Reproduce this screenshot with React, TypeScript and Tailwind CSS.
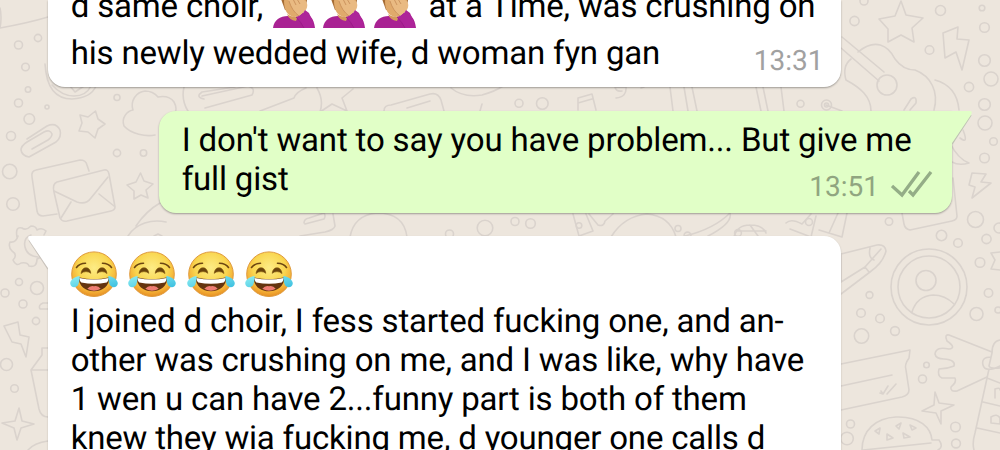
import React from "react";

function Joy() {
  return (
    <svg viewBox="0 0 48 47" className="h-[47px] w-12 shrink-0">
      <defs>
        <radialGradient id="joyFace" cx="50%" cy="36%" r="65%">
          <stop offset="0" stopColor="#fdec86" />
          <stop offset="0.55" stopColor="#f9d650" />
          <stop offset="0.82" stopColor="#f4b036" />
          <stop offset="1" stopColor="#e58b20" />
        </radialGradient>
        <linearGradient id="joyTear" x1="0" y1="0" x2="1" y2="1">
          <stop offset="0" stopColor="#8eeef2" />
          <stop offset="1" stopColor="#3cbfe0" />
        </linearGradient>
      </defs>
      <circle cx="24" cy="23.2" r="22.3" fill="url(#joyFace)" stroke="#df9a3c" strokeWidth="1" />
      <g fill="none" stroke="#6b4511" strokeLinecap="round">
        <path d="M6.5 16.5Q9.5 12.4 15.5 12.3M32.5 12.3Q38.5 12.4 41.5 16.5" strokeWidth="1.6" />
      </g>
      <path d="M11 22.5Q12 16.8 16 16.8T20.8 22.3Q18.8 20.6 16 20.6T11 22.5ZM27.2 22.3Q28 16.8 32 16.8T37 22.5Q34.8 20.6 32 20.6T27.2 22.3Z" fill="#69430c" stroke="#815710" strokeWidth="0.7" />
      <path d="M8.5 26.3Q24 30 39.5 26.3C39.2 35 33 40.2 24 40.2S8.8 35 8.5 26.3Z" fill="#64340f" />
      <path d="M9.3 26.9Q24 30.3 38.7 26.9Q38.3 30 36.7 31.5Q24 34.2 11.3 31.5Q9.7 30 9.3 26.9Z" fill="#fff" />
      <path d="M17.3 37.8Q20.3 34.2 24 35.3Q28 34.2 30.7 37.8Q24 41.5 17.3 37.8Z" fill="#ee7d73" />
      <path d="M9.7 25C5.6 25.1.2 28.8.2 32.2.4 37 6.4 37.6 8.3 33.6 9.3 31 9.6 28 9.7 25ZM38.3 25c4.1.1 9.5 3.8 9.5 7.2-.2 4.8-6.2 5.4-8.1 1.4-1-2.6-1.3-5.6-1.4-8.6Z" fill="url(#joyTear)" />
    </svg>
  );
}

function Facepalm() {
  return (
    <svg viewBox="0 0 42 42" className="h-[42px] w-[42px] shrink-0">
      <path d="M8 13Q8 2 20 2Q33 2 34 14L32 24H12Z" fill="#a76d35" />
      <path d="M11 15Q13 6 22 6Q34 7 33 18Q31 30 21 31Q11 29 11 15Z" fill="#e0aa6b" />
      <path d="M0 42C1 34 7 30 15 30L22 34L29 27C37 27 41 33 42 42Z" fill="#a92293" />
      <path d="M14 28Q19 32 25 30L23 35Q16 34 14 28Z" fill="#d59a5c" />
      <path d="M15 13C18 12 24 12 31 14C36 16 35 24 30 27L26 30C22 28 19 23 15 13Z" fill="#e9ba82" />
      <path d="M16 15Q19 25 26 30M20 13L23 19M24 13L27 18" fill="none" stroke="#c58c57" strokeWidth="0.8" />
      <path d="M23 31C27 30 31 27 32 24L36 27Q40 34 41 42H31Q27 36 23 31Z" fill="#ad2499" />
      <path d="M23 31Q28 36 31 42" fill="none" stroke="#951c84" strokeWidth="0.8" />
    </svg>
  );
}

const bubbles: [number, number, number][] = [
  [18.5, 45, 4], [38, 38, 3.6], [25.5, 67, 3.8], [28, 89.5, 2.7], [18.5, 103, 4], [117, 97.5, 3], [47, 107, 2], [29.3, 119, 5.3], [11, 136, 4.5], [9.7, 171.5, 7.2], [13, 204, 6.3], [117, 153, 3.6], [143.5, 153, 3.2],
  [5, 293, 4], [19, 282, 3.5], [37, 288, 6.5], [23, 304, 4], [36, 321, 3.6], [6.5, 364.5, 6], [14.5, 388.5, 3.8],
  [864, 1, 4], [854.5, 21, 4.6], [940.5, 10.5, 5], [982, 8, 2.8], [984.5, 27.5, 4.8], [929.5, 50, 4.3], [984.5, 60.5, 5.8], [991, 79, 7], [969, 87, 4.6], [984.5, 104.5, 5.8], [985, 123, 7], [993.5, 141.5, 3.8], [984.5, 158, 4.8], [975.5, 219.5, 8], [889, 221.5, 3.7], [941.5, 235.5, 5.2], [999, 228, 5], [958, 243, 4.3], [986.5, 239, 4.6], [980, 262.5, 4.8], [988.5, 293, 4.2], [976.5, 314, 6.5], [998, 310, 3], [869.5, 295, 3.4], [861, 313, 4.3], [880, 318.5, 4.3], [895, 331, 4.4], [861.5, 336, 7.2], [926.5, 365, 2.8], [922.5, 379, 4], [850.5, 424, 4], [847, 438.5, 6.3], [955.5, 427, 4.8], [956, 443.5, 4.4],
  [519, 103.3, 4], [542.3, 103.5, 5.8], [800.5, 103.7, 3.5], [826.5, 105, 5], [826.5, 105, 2], [449.5, 234, 4], [485, 228, 7.8], [515, 221.5, 4], [530.5, 223.5, 4.8], [579, 225.5, 2.8], [678, 228.5, 3], [687.5, 235.5, 3.4], [809, 222, 3.5], [738, 233, 3.4],
];

const lines = [
  // Left edge
  "M0 28Q28 23 48 17M0 8Q2 17 0 28",
  "M45 64Q47 99 72 99Q91 98 96 86M52 85Q62 96 74 96T91 86M70 86L75 92L84 86",
  "M27 139L47 126Q56 122 60 130Q62 137 56 142L29 157Q22 156 21 150Q21 146 27 142L44 132Q50 129 52 134Q52 137 48 140L32 149",
  "M95.5 111L98 119L105 124L98 129L95 138L88 132L79 131L82 123L80 115L88 117Z",
  "M155 135C146 137 131 134 124 126C121 118 127 111 133 110C130 101 136 92 145 91Q153 91 158 97Q169 95 174 102Q178 109 174 115",
  "M57 214L43 216Q38 216 37 211L32 177Q31 171 36 170L80 160Q86 160 87 165L89 171",
  "M57 182L104 170Q108 169 109 174L115 207Q115 210 111 211L67 221Q62 222 60 218L54 192Q52 184 57 182Z",
  "M54 191L77 202Q86 205 91 198L108 177M61 218L71 202M99 194L114 206",
  "M140.5 173L144 181L153 184L146 190L148 198L141 195L134 199L134 191L127 185L136 182Z",
  "M128 236C136 223 152 219 166 222M136 226Q146 211 160 203M154 236l4-2 4 2",
  "M17 237Q15 226 22 228Q26 231 31 226Q36 226 37 230Q42 227 46 231L44 235M18 236Q16 243 10 242Q8 247 12 251Q18 255 13 260Q16 267 21 263Q28 262 29 266Q37 268 37 259Q42 256 47 258M31 235Q23 238 25 247T38 257M48 303H43Q38 305 40 309H48M4 326L18 322L20 335L29 337L26 357L21 344L12 342Z",
  "M48 348H42V355L31 370L39 409Q41 417 48 417M31 370H48M48 441Q34 443 28 450",
  "M19 408L22 421L34 424L21 428L17 440L14 428L2 423L15 421Z",
  // Strip between the first two messages
  "M184 87Q181 100 188 111M204 99Q195 97 202 92L235 87M202 96L248 86Q256 88 252 95L205 108M260 111L294 98Q296 92 306 88M317 88Q324 100 320 112L332 104L347 111L342 98L353 89M384 111Q384 105 391 105L430 94Q438 92 441 100L444 111M407 108L430 101M451 88Q463 98 482 95Q496 91 503 86M480 111L482 104",
  "M578 110V98L592 94L596 110M578 103L592 99M616 98Q627 97 626 87H615Q616 92 622 91M641 88L644 87M673 111L670 87M688 111L684 87M697 111L692 87M756 87L761 111M763 87L768 111M781 87L784 111M826 105L842 111",
  // Upper right
  "M901 1L906 15L923 18L912 28L914 42L901 35L888 42L888 29L879 19L895 16Z",
  "M958 27L943 33L945 58L956 52L962 70L969 40L957 39Z",
  "M842 37L884 72M841 48L879 81M897 85A10 10 0 1 1 877 85A10 10 0 1 1 897 85",
  "M858 52C875 38 888 45 895 59Q903 70 915 70C931 76 939 92 934 110M851 59Q842 66 846 80C861 88 871 97 871 111M904 110L911 99Q917 95 916 103L910 110M935 80Q957 86 959 110M963 130Q969 145 960 138M950 143Q958 159 969 163Q959 166 952 162",
  "M972 173L986 174L981 182L991 183L972 198L975 187L969 185Z",
  "M953 178L957 216Q957 220 952 221L910 230Q905 229 904 224L902 213",
  // Strip above the last message
  "M304 223Q304 219 309 218L324 213M305 224L324 219Q326 216 324 213M333 214L335 226Q334 230 325 232L300 236M350 237Q354 215 377 213Q404 213 407 237M573 214L579 236L593 231L586 214M589 214L598 225Q604 227 605 221L613 214M611 237Q624 216 647 214Q670 216 676 237M685 236Q714 229 730 213M708 236Q733 223 730 213M734 237Q737 225 750 225T766 233M737 231L766 231M750 225L758 236M786 223Q791 218 802 224L811 214M790 229L811 237L816 216M819 230L842 237L847 213M838 213L829 233",
  // Lower right
  "M841 254L877 245Q885 244 886 251Q883 263 870 272L841 294M841 282L865 267L881 249M870 248Q868 258 874 260M865 267L869 272M841 254V282",
  "M841 364L910 350L909 358Q904 365 906 370L909 390Q909 395 902 397L841 410M841 386L892 375",
  "M880 393L883 394L888 386M887 394L896 384M881 391L883 394",
  "M862 450C862 430 876 418 896 417C920 416 931 428 932 440H939Q944 447 938 450M863 450L931 443",
  "M875 431L880 428L879 434ZM887 434L893 438L887 440ZM896 426L901 423L899 429ZM903 433L910 437L904 438ZM910 425L916 428L912 430Z",
  "M992 352L949 335Q944 334 947 341Q957 348 949 349Q936 346 935 354Q936 359 944 359Q956 360 954 366Q947 369 939 369Q937 376 942 378L955 378Q957 382 951 387Q950 392 957 391L987 377",
  "M1000 340Q992 341 992 353L989 366Q990 369 1000 368M991 357Q981 357 983 365T1000 366M989 369L975 433Q972 443 974 450M987 378L1000 383M983 402L1000 406M977 428L1000 433M995 398V389Q1000 387 1000 390M991 423V417Q997 413 1000 418V424Z",
  "M935 392L939 403L954 405L941 411L941 424L936 413L922 411L934 405Z",
  "M991 253L1000 252M991 253L995 260L991 269L1000 270",
];

function Wallpaper() {
  return (
    <svg viewBox="0 0 1000 450" className="absolute inset-0 h-[450px] w-[1000px]" fill="none" stroke="#dad3cd" strokeWidth="1.6" strokeLinecap="round" strokeLinejoin="round">
      {lines.map((d, i) => <path key={i} d={d} />)}
      {bubbles.map(([x, y, r], i) => <circle key={i} cx={x} cy={y} r={r} />)}
      <circle cx="929" cy="287" r="38" />
      <circle cx="929" cy="287" r="31" />
      <circle cx="926" cy="280.5" r="10" />
      <path d="M912 312Q917 296 933 295Q945 295 954 304" />
    </svg>
  );
}

function Line({ children, className = "" }: { children: React.ReactNode; className?: string }) {
  return <div className={"h-[39px] whitespace-pre leading-[39px] " + className}>{children}</div>;
}

export default function App() {
  return (
    <main className="relative h-[450px] w-[1000px] overflow-hidden bg-[#ede6dd] font-['Roboto',sans-serif] text-[33px] text-black [text-rendering:geometricPrecision]">
      <Wallpaper />
      <div className="relative flex flex-col">
        <section className="ml-12 h-[87px] w-[793px] rounded-b-[17px] bg-white pl-[22.7px] tracking-[-0.16px] shadow-[0_1px_2px_#00000055]">
          <div className="-mt-[13px] flex h-[47px] items-start whitespace-pre">
            <Line className="w-[202.3px]">d same choir,</Line>
            <div className="-mt-px flex gap-[8.5px]"><Facepalm /><Facepalm /><Facepalm /></div>
            <Line className="ml-[12.5px]">at a Time, was crushing on</Line>
          </div>
          <div className="flex justify-between pr-[17.5px]">
            <Line>his newly wedded wife, d woman fyn gan</Line>
            <time className="pt-[12px] text-[28px] leading-[30px] tracking-normal text-[#a1a1a1]">13:31</time>
          </div>
        </section>

        <section className="relative ml-[159px] mt-6 h-[102px] w-[793px] rounded-[17px] rounded-tr-none bg-[#e1ffc7] pl-[22.7px] pt-[10px] tracking-[-0.15px] shadow-[0_1px_2px_#00000055]">
          <svg viewBox="0 0 24 34" className="absolute -right-[21px] top-0 h-[34px] w-6"><path d="M3 33L22 4" stroke="#bfc4b4" strokeWidth="1.4" fill="none" /><path d="M0 0H21Q24 0 22 4L3 32V34H0Z" fill="#e1ffc7" /></svg>
          <Line>I don't want to say you have problem... But give me</Line>
          <div className="flex justify-between pr-[19px]">
            <Line>full gist</Line>
            <div className="flex items-start gap-[12px] pt-[12px] text-[28px] leading-[30px] tracking-normal text-[#90a580]">
              <time>13:51</time>
              <svg viewBox="0 0 42 28" className="-mt-px h-7 w-[42px]" fill="none" stroke="#94ad87" strokeWidth="3.3"><path d="M1 15L11 24L28 1M18 20L22 24L40 1" /></svg>
            </div>
          </div>
        </section>

        <section className="relative ml-12 mt-[23px] h-[240px] w-[793px] rounded-tr-[17px] bg-white pl-[22.7px] pt-[15px] tracking-[-0.18px] shadow-[0_1px_2px_#00000035]">
          <svg viewBox="0 0 24 34" className="absolute -left-[21px] top-0 h-[34px] w-6"><path d="M2 4L21 33" stroke="#c9c3bc" strokeWidth="1.4" fill="none" /><path d="M24 0H3Q0 0 2 4L21 32V34H24Z" fill="#fff" /></svg>
          <div className="-ml-[0.7px] flex h-[51px] gap-[10.4px]"><Joy /><Joy /><Joy /><Joy /></div>
          <Line>I joined d choir, I fess started fucking one, and an-</Line>
          <Line>other was crushing on me, and I was like, why have</Line>
          <Line>1 wen u can have 2...funny part is both of them</Line>
          <Line>knew they wia fucking me, d younger one calls d</Line>
        </section>
      </div>
    </main>
  );
}
